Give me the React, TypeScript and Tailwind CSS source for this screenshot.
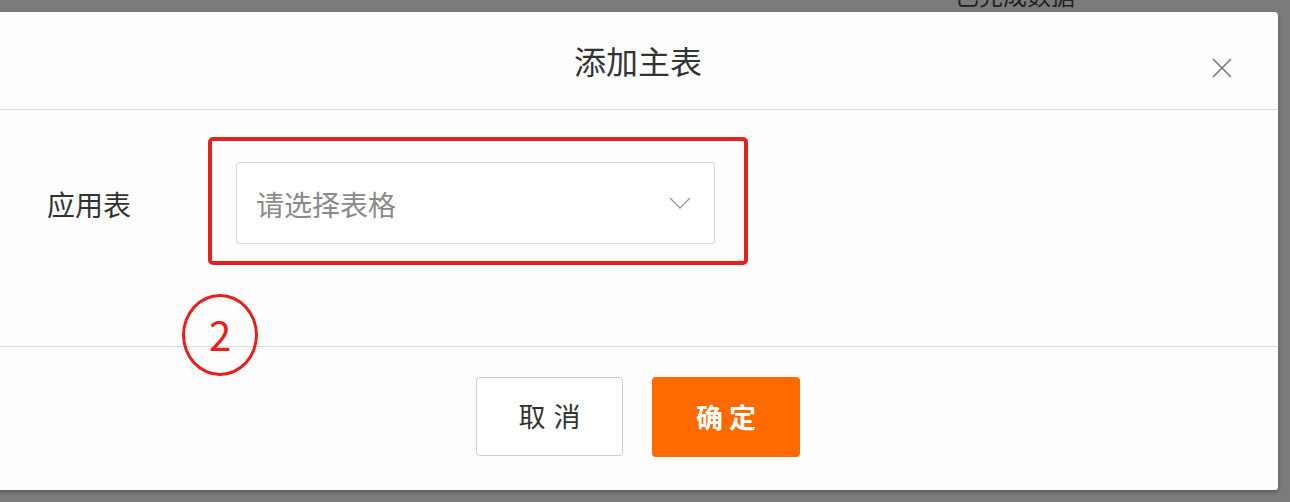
import React from "react";

export default function App() {
  const font = { fontFamily: '"Noto Sans CJK SC", "Noto Sans", sans-serif' };
  return (
    <div className="w-[1290px] h-[502px] bg-[#7b7b7b] overflow-hidden" style={font}>
      <div className="h-[12px] overflow-hidden relative">
        <div className="absolute left-[955px] top-[-18px] text-[24px] leading-[26px] text-[#222]">已完成数据</div>
      </div>
      <div className="ml-[-20px] w-[1298px] h-[478px] bg-[#fdfdfe] rounded-tr-[4px] rounded-br-[3px] flex flex-col shadow-[0_2px_4px_rgba(0,0,0,0.3)]">
        <div className="h-[98px] border-b border-[#dcdcdc] flex items-center relative">
          <div className="flex-1 text-center text-[32px] text-[#333] pl-[18px] pb-[2px]">添加主表</div>
          <div className="absolute left-[1230px] top-[44px] w-[24px] h-[24px]">
            <svg width="24" height="24" viewBox="0 0 24 24">
              <path d="M3 3 L21 21 M21 3 L3 21" stroke="#777" strokeWidth="1.6" fill="none" />
            </svg>
          </div>
        </div>
        <div className="h-[237px] border-b border-[#dcdcdc] relative">
          <div className="flex items-start pt-[27px]">
            <div className="w-[228px] pl-[67px] pt-[52px] text-[28px] leading-[30px] text-[#333]">应用表</div>
            <div className="w-[540px] h-[128px] border-[4px] border-[#e8201c] rounded-[5px] pl-[24px] pt-[21px]">
              <div className="w-[479px] h-[82px] border border-[#d7d7d7] rounded-[3px] bg-white flex items-center justify-between pl-[19px] pr-[22px]">
                <span className="text-[28px] text-[#8a8a8a] pt-[2px]">请选择表格</span>
                <svg width="24" height="16" viewBox="0 0 24 16">
                  <path d="M2 3 L12 13 L22 3" stroke="#999" strokeWidth="1.4" fill="none" />
                </svg>
              </div>
            </div>
          </div>
          <div className="absolute left-[202px] top-[184px] w-[76px] h-[82px] rounded-[50%] border-[3px] border-[#e8201c] flex items-center justify-center text-[40px] text-[#e8201c] leading-none pb-[2px]">
            2
          </div>
        </div>
        <div className="flex justify-center gap-[29px] pt-[30px] pl-[18px]">
          <button className="w-[147px] h-[79px] border border-[#cfcfcf] rounded-[4px] bg-white text-[27px] text-[#333] tracking-[8px] pl-[8px]">取消</button>
          <button className="w-[148px] h-[80px] rounded-[4px] bg-[#ff6a00] text-[27px] font-bold text-white tracking-[6px] pl-[6px]">确定</button>
        </div>
      </div>
    </div>
  );
}
